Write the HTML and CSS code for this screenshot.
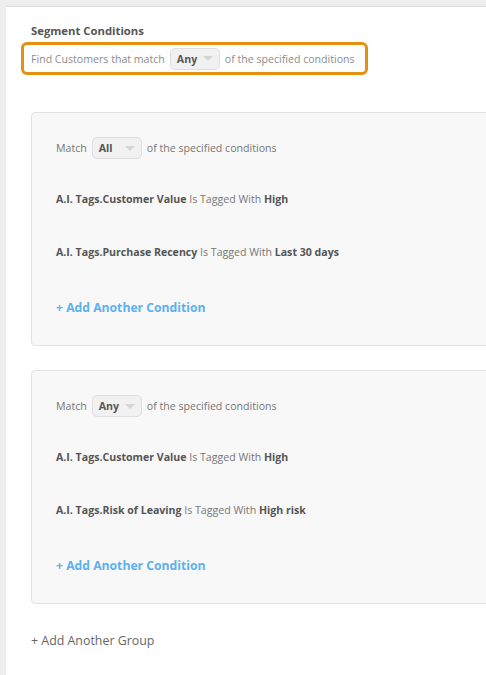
FILE: index.html
```html
<html>
<head>
	<link rel="stylesheet" href="styles.css">
</head>
<body>
<div class="page">
	<div class="title">Segment Conditions</div>
	<div class="finder">
		<span>Find Customers that match</span>
		<span class="pick">Any<i class="arrow"></i></span>
		<span>of the specified conditions</span>
	</div>

	<div class="group">
		<div class="match">
			<span>Match</span>
			<span class="pick">All<i class="arrow"></i></span>
			<span>of the specified conditions</span>
		</div>
		<div class="cond first"><b>A.I. Tags.Customer Value</b> Is Tagged With <b>High</b></div>
		<div class="cond"><b>A.I. Tags.Purchase Recency</b> Is Tagged With <b>Last 30 days</b></div>
		<a class="addcond" href="#">+ Add Another Condition</a>
	</div>

	<div class="group">
		<div class="match">
			<span>Match</span>
			<span class="pick">Any<i class="arrow"></i></span>
			<span>of the specified conditions</span>
		</div>
		<div class="cond first"><b>A.I. Tags.Customer Value</b> Is Tagged With <b>High</b></div>
		<div class="cond"><b>A.I. Tags.Risk of Leaving</b> Is Tagged With <b>High risk</b></div>
		<a class="addcond" href="#">+ Add Another Condition</a>
	</div>

	<a class="addgroup" href="#">+ Add Another Group</a>
</div>
</body>
</html>
```

FILE: styles.css
```css
body {
	margin: 0;
	background: #eeeeee;
	overflow: hidden;
	font-family: "Open Sans", "Liberation Sans", sans-serif;
	color: #555555;
}
.page {
	margin: 6px 0 0 6px;
	border-top: 1px solid #dddddd;
	background: #ffffff;
	padding: 16px 0 30px 25px;
	width: 700px;
	min-height: 700px;
}
.title {
	font-size: 11.3px;
	font-weight: bold;
	line-height: 16px;
	color: #555555;
}
.finder {
	display: inline-flex;
	align-items: center;
	gap: 5px;
	box-sizing: border-box;
	height: 33px;
	margin: 3px 0 0 -10px;
	padding: 0 10px 0 7px;
	border: 3px solid #e5900f;
	border-radius: 6px;
	font-size: 10.6px;
	color: #8d8d8d;
}
.pick {
	display: inline-flex;
	align-items: center;
	justify-content: space-between;
	box-sizing: border-box;
	width: 50px;
	height: 22px;
	padding: 0 6px 0 6px;
	background: #f1f1f1;
	border: 1px solid #dedede;
	border-radius: 5px;
	font-weight: bold;
	color: #555555;
	font-size: 10.6px;
}
.arrow {
	width: 0;
	height: 0;
	border-left: 5px solid transparent;
	border-right: 5px solid transparent;
	border-top: 5px solid #d6d6d6;
}
.group {
	margin-top: 37px;
	width: 600px;
	box-sizing: border-box;
	background: #f8f8f8;
	border: 1px solid #e2e2e2;
	border-radius: 4px;
	padding: 24px 24px 28px 24px;
}
.group + .group {
	margin-top: 24px;
}
.match {
	display: flex;
	align-items: center;
	gap: 5px;
	font-size: 10.6px;
	color: #777777;
}
.cond {
	font-size: 10.6px;
	line-height: 16px;
	color: #777777;
	margin-top: 37px;
}
.cond.first {
	margin-top: 32px;
}
.cond b {
	color: #555555;
}
.addcond {
	display: block;
	margin-top: 39px;
	font-size: 12.2px;
	line-height: 18px;
	font-weight: bold;
	color: #5cb1ee;
	text-decoration: none;
}
.addgroup {
	display: block;
	margin-top: 28px;
	font-size: 12.4px;
	line-height: 18px;
	color: #666666;
	text-decoration: none;
}
```
